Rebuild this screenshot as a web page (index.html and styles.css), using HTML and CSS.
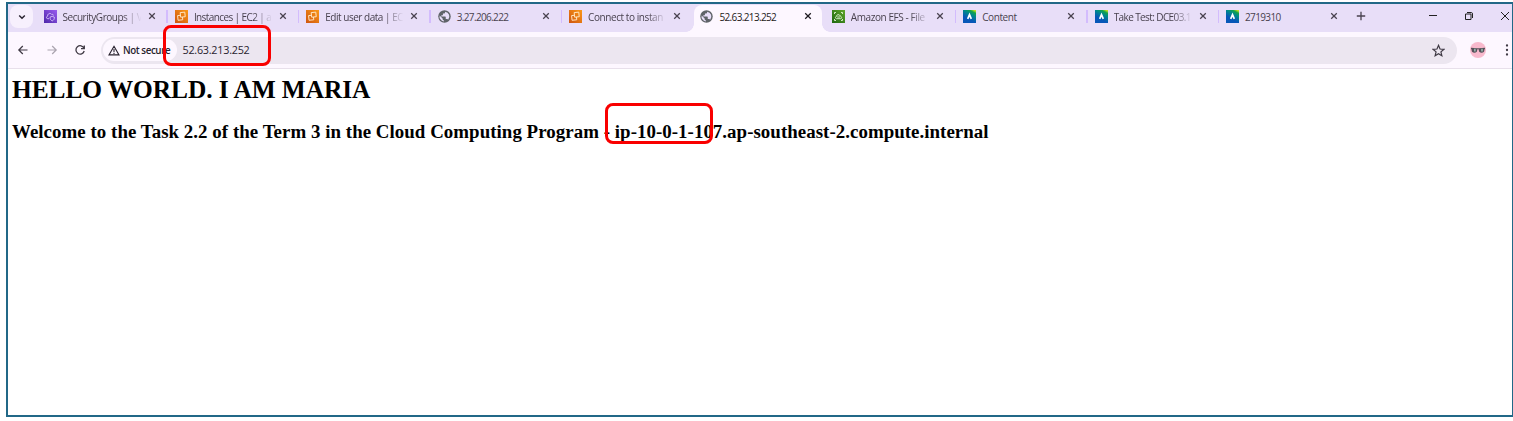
FILE: index.html
```
<!DOCTYPE html>
<html lang="en">
<head>
<meta charset="utf-8">
<title>52.63.213.252</title>
<link rel="stylesheet" href="styles.css">
</head>
<body>
<svg class="defs" aria-hidden="true">
  <defs>
    <linearGradient id="purple" x1="0" y1="1" x2="1" y2="0"><stop stop-color="#4d27a8"/><stop offset="1" stop-color="#9a5cf0"/></linearGradient>
    <linearGradient id="orange" x1="0" y1="1" x2="1" y2="0"><stop stop-color="#ce5510"/><stop offset="1" stop-color="#fb9816"/></linearGradient>
    <linearGradient id="green" x1="0" y1="1" x2="1" y2="0"><stop stop-color="#1b660f"/><stop offset="1" stop-color="#5fa52a"/></linearGradient>
    <linearGradient id="learn" x1="0.3" y1="1" x2="0.85" y2="0"><stop offset=".3" stop-color="#0757b8"/><stop offset=".65" stop-color="#008a8a"/><stop offset=".85" stop-color="#12a34a"/><stop offset="1" stop-color="#c8e020"/></linearGradient>
    <symbol id="vpc" viewBox="0 0 13 13"><rect width="13" height="13" fill="url(#purple)"/><path d="M5 8.700H3.800C2.100 8.700 2 6.500 3.600 6.200 3.300 3.600 6.400 2.500 7.800 4.500 8.700 4 9.600 4.700 9.600 5.500M6 7.200 8.200 6.300l2.200.9c0 2-.7 3-2.200 3.700C6.800 10.200 6 9.200 6 7.200z" fill="none" stroke="#e3d3ff" stroke-width=".8"/></symbol>
    <symbol id="ec2" viewBox="0 0 13 13"><rect width="13" height="13" fill="url(#orange)"/><path d="M5.600 2.500H10.200V7.100H5.600zM5.600 5.200H2.700V9.900H7.400V7.100" transform="rotate(-6 6.500 6.500)" fill="none" stroke="#ffe6c2" stroke-width=".95"/></symbol>
    <symbol id="efs" viewBox="0 0 13 13"><rect width="13" height="13" fill="url(#green)"/><path d="M4.300 8.700C3 8.300 3.200 6.600 4.400 6.500 4.400 4.300 7.200 4.100 7.900 5.600c1 0 1.100.7 1.100 1.100C10 7.200 9.800 8.700 8.700 8.700zM2.500 4V2.500H4M9 2.500h1.500V4M2.500 9v1.500H4M9 10.500h1.500V9M5.200 7h3" fill="none" stroke="#e1f5d4" stroke-width=".9"/></symbol>
    <symbol id="lms" viewBox="0 0 13 13"><rect width="13" height="13" fill="url(#learn)"/><path d="M4.700 8.800 6.500 4.700 8.300 8.800" fill="none" stroke="#fff" stroke-width="1.700"/></symbol>
    <symbol id="globe" viewBox="1.600 1.600 20.800 20.800"><circle cx="12" cy="12" r="10" fill="#5f6368"/><path d="M13 4.200V5c0 1.100-.9 2-2 2H9.500v2c0 .6-.4 1-1 1H7v2h6c.6 0 1 .4 1 1v3h2c.9 0 1.600.5 1.900 1.300A8 8 0 0 0 13 4.200zM4.200 10.200 9 15v1c0 1.100.9 2 2 2v1.900A8 8 0 0 1 4.200 10.200z" fill="#e8def8"/></symbol>
    <symbol id="x" viewBox="0 0 8 8"><path d="M1.200 1.200l5.600 5.600M6.800 1.200 1.200 6.800" stroke="currentColor" stroke-width="1.250"/></symbol>
  </defs>
</svg>
<main class="window">
  <header class="tabstrip">
    <button class="tab-search"><svg width="10" height="10" viewBox="0 0 10 10"><path d="M2.200 3.500 5 6.200 7.800 3.500" fill="none" stroke="#29232f" stroke-width="1.500"/></svg></button>
    <nav class="tabs">
      <div class="tab"><svg class="icon"><use href="#vpc"/></svg><span class="title faded">SecurityGroups | V</span><svg class="close"><use href="#x"/></svg></div>
      <div class="tab"><svg class="icon"><use href="#ec2"/></svg><span class="title faded tight">Instances | EC2 | a</span><svg class="close"><use href="#x"/></svg></div>
      <div class="tab"><svg class="icon"><use href="#ec2"/></svg><span class="title faded">Edit user data | EC</span><svg class="close"><use href="#x"/></svg></div>
      <div class="tab"><svg class="icon"><use href="#globe"/></svg><span class="title number">3.27.206.222</span><svg class="close"><use href="#x"/></svg></div>
      <div class="tab"><svg class="icon"><use href="#ec2"/></svg><span class="title faded loose">Connect to instan</span><svg class="close"><use href="#x"/></svg></div>
      <div class="tab active"><svg class="icon"><use href="#globe"/></svg><span class="title number">52.63.213.252</span><svg class="close"><use href="#x"/></svg></div>
      <div class="tab"><svg class="icon"><use href="#efs"/></svg><span class="title faded loose">Amazon EFS - File</span><svg class="close"><use href="#x"/></svg></div>
      <div class="tab"><svg class="icon"><use href="#lms"/></svg><span class="title loose">Content</span><svg class="close"><use href="#x"/></svg></div>
      <div class="tab"><svg class="icon"><use href="#lms"/></svg><span class="title faded tight">Take Test: DCE03.1</span><svg class="close"><use href="#x"/></svg></div>
      <div class="tab"><svg class="icon"><use href="#lms"/></svg><span class="title number">2719310</span><svg class="close"><use href="#x"/></svg></div>
    </nav>
    <button class="new-tab"><svg width="10" height="10" viewBox="0 0 10 10"><path d="M5 .8v8.400M.8 5h8.400" stroke="#49424f" stroke-width="1.300"/></svg></button>
    <div class="controls">
      <svg width="10" height="10" viewBox="0 0 10 10"><path d="M1 4.500h8" stroke="#222" stroke-width="1"/></svg>
      <svg width="10" height="10" viewBox="0 0 10 10"><path d="M1.500 3h5.500v5.500H1.500zM3 1.500h4.300Q8.500 1.500 8.500 3v4" fill="none" stroke="#222" stroke-width="1"/></svg>
      <svg width="10" height="10" viewBox="0 0 10 10"><path d="M1 1l8 8M9 1 1 9" stroke="#222" stroke-width="1"/></svg>
    </div>
  </header>
  <div class="toolbar">
    <div class="history">
      <svg width="12" height="12" viewBox="0 0 12 12"><path d="M10.500 6H2M5.800 2 1.800 6l4 4" fill="none" stroke="#3f3944" stroke-width="1.200"/></svg>
      <svg width="12" height="12" viewBox="0 0 12 12"><path d="M1.500 6H10M6.200 2l4 4-4 4" fill="none" stroke="#aaa4af" stroke-width="1.200"/></svg>
      <svg width="12" height="12" viewBox="0 0 12 12"><path d="M10 4.200A4.200 4.200 0 1 0 10.200 7M10.300 1.400v3.200H7" fill="none" stroke="#3f3944" stroke-width="1.300"/></svg>
    </div>
    <div class="omnibox">
      <div class="security"><svg width="12" height="11" viewBox="0 0 12 11"><path d="M6 1.300 11 9.900H1zM6 4v3.200M6 7.900v1" fill="none" stroke="#29232f" stroke-width="1.100"/></svg><span>Not secure</span></div>
      <span class="url">52.63.213.252</span>
      <svg class="star" width="13" height="13" viewBox="0 0 24 24"><path d="M12 2.500l2.800 6.700 7.200.6-5.500 4.700 1.700 7.100-6.200-3.800-6.200 3.800 1.700-7.100L2 9.800l7.200-.6z" fill="none" stroke="#3f3944" stroke-width="2.200"/></svg>
    </div>
    <svg class="avatar" width="16" height="16" viewBox="0 0 16 16"><circle cx="8" cy="8" r="8" fill="#f8b9cd"/><path d="M1 5.700 7 6.200h2l6-.5v1Q14.500 7 14.400 8a2.800 2.800 0 0 1-5.600 0L8.600 7.200H7.400L7.200 8a2.800 2.800 0 0 1-5.600 0Q1.500 7 1 6.700z" fill="#55515a"/><path d="M4.900 6.800v2.800M12 6.800v2.800" stroke="#a8cfc3" stroke-width="1.300"/></svg>
    <svg class="menu" width="4" height="14" viewBox="0 0 4 14"><g fill="#3f3944"><circle cx="2" cy="2.500" r="1.150"/><circle cx="2" cy="7" r="1.150"/><circle cx="2" cy="11.500" r="1.150"/></g></svg>
  </div>
  <article class="page">
    <h1>HELLO WORLD. I AM MARIA</h1>
    <h3>Welcome to the Task 2.2 of the Term 3 in the Cloud Computing Program - ip-10-0-1-107.ap-southeast-2.compute.internal</h3>
  </article>
</main>
<div class="marker marker-url"></div>
<div class="marker marker-host"></div>
</body>
</html>
```
FILE: styles.css
```
* { box-sizing: border-box; }
body { margin: 0; padding: 2px 0 0 6px; height: 421px; overflow: hidden; background: #fff; font-family: "Open Sans", "Noto Sans", sans-serif; }
.defs { position: absolute; width: 0; height: 0; }
svg { display: block; flex: none; }
button { border: 0; padding: 0; background: none; }
.window { width: 1507px; height: 415px; border: 2px solid #216887; border-right-width: 1px; }
.tabstrip { display: flex; height: 28px; background: #e8def8; }
.tab-search { display: flex; align-items: center; justify-content: center; width: 23px; height: 23px; margin: 1px 3px 0 2px; border-radius: 8px; background: #f7f0fd; }
.tabs { display: flex; width: 1314px; }
.tab { position: relative; display: flex; align-items: center; width: 131.4px; height: 24px; padding-left: 7.500px; color: #49424f; }
.tab + .tab:not(.active):not(.active + .tab)::before { content: ""; position: absolute; left: -1px; top: 6px; width: 1.500px; height: 13px; background: #d3bcfd; }
.icon { width: 13px; height: 13px; }
.title { flex: none; width: 80px; padding-top: 1px; margin-left: 6px; white-space: nowrap; font-size: 10px; letter-spacing: -.48px; line-height: 16px; }
.faded { -webkit-mask-image: linear-gradient(90deg, #000 74%, transparent 98%); mask-image: linear-gradient(90deg, #000 74%, transparent 98%); }
.tight { letter-spacing: -.6px; }
.loose { letter-spacing: -.42px; }
.number { letter-spacing: -.64px; }
.close { width: 8px; height: 8px; margin-left: 5px; }
.active { color: #1d1a20; }
.active::after { content: ""; position: absolute; z-index: 0; left: 1px; right: 2px; top: 1px; height: 27px; border-radius: 8px 8px 0 0; background: #fdf7ff; }
.active > * { position: relative; z-index: 1; }
.active::before { content: ""; position: absolute; left: -7px; right: -6px; top: 20px; height: 8px; background: radial-gradient(circle at 0 0, transparent 7.500px, #fdf7ff 8px) left / 8px 8px no-repeat, radial-gradient(circle at 100% 0, transparent 7.500px, #fdf7ff 8px) right / 8px 8px no-repeat; }
.new-tab { margin: 7px 0 0 6px; align-self: flex-start; }
.controls { display: flex; gap: 26px; margin: 7px 0 0 61.500px; }
.toolbar { display: flex; align-items: center; height: 37px; padding: 0 3.500px 0 9px; background: #fdf7ff; border-bottom: 1px solid #e8e0eb; }
.history { display: flex; gap: 16.500px; width: 84px; }
.omnibox { display: flex; align-items: center; width: 1356px; height: 27px; padding: 0 12px 0 2px; border-radius: 14px; background: #ece6f0; }
.security { display: flex; align-items: center; gap: 3px; width: 74px; height: 22px; padding-left: 5px; border-radius: 11px; background: #fdf7ff; color: #29232f; font-size: 9.800px; font-weight: 600; letter-spacing: -.43px; white-space: nowrap; }
.url { margin-left: 5.500px; padding-bottom: 1px; color: #29232f; font-size: 10.800px; letter-spacing: -.25px; }
.star { margin-left: auto; }
.avatar { margin-left: 13px; }
.menu { margin-left: auto; }
.page { padding: 6px 0 0 4px; color: #000; font-family: "Liberation Serif", serif; white-space: nowrap; }
h1 { margin: 0; font-size: 25.400px; line-height: 28px; letter-spacing: -.07px; }
h3 { margin: 18px 0 0; font-size: 18.900px; line-height: 22px; letter-spacing: .04px; }
.marker { position: absolute; border: 3px solid #f90000; border-radius: 8px; }
.marker-url { left: 163px; top: 25px; width: 108px; height: 41px; }
.marker-host { left: 605px; top: 103px; width: 108px; height: 41px; }
```
